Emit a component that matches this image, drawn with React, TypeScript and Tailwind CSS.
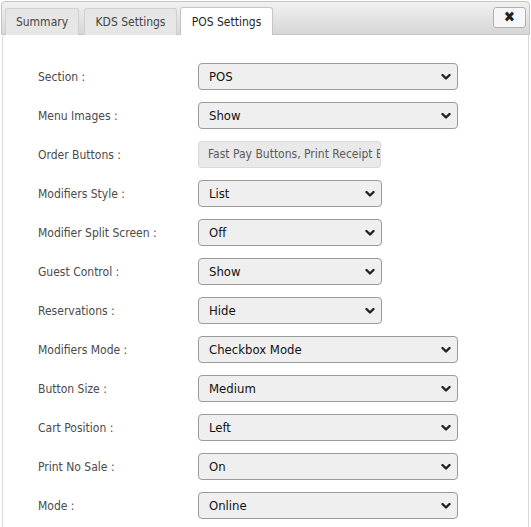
import { useState } from "react"

const font = { fontFamily: '"DejaVu Sans Condensed", "DejaVu Sans", Tahoma, sans-serif' }

type Row = { label: string; value: string; options: string[]; wide: boolean; readOnly?: boolean }

const rows: Row[] = [
  { label: "Section :", value: "POS", options: ["POS", "KDS"], wide: true },
  { label: "Menu Images :", value: "Show", options: ["Show", "Hide"], wide: true },
  { label: "Order Buttons :", value: "Fast Pay Buttons, Print Receipt Button", options: [], wide: false, readOnly: true },
  { label: "Modifiers Style :", value: "List", options: ["List", "Grid"], wide: false },
  { label: "Modifier Split Screen :", value: "Off", options: ["Off", "On"], wide: false },
  { label: "Guest Control :", value: "Show", options: ["Show", "Hide"], wide: false },
  { label: "Reservations :", value: "Hide", options: ["Show", "Hide"], wide: false },
  { label: "Modifiers Mode :", value: "Checkbox Mode", options: ["Checkbox Mode", "Button Mode"], wide: true },
  { label: "Button Size :", value: "Medium", options: ["Small", "Medium", "Large"], wide: true },
  { label: "Cart Position :", value: "Left", options: ["Left", "Right"], wide: true },
  { label: "Print No Sale :", value: "On", options: ["On", "Off"], wide: true },
  { label: "Mode :", value: "Online", options: ["Online", "Offline"], wide: true },
]

const tabs = [
  { name: "Summary", cls: "w-[74px]" },
  { name: "KDS Settings", cls: "ml-[2px] w-[93px]" },
  { name: "POS Settings", cls: "w-[93px]" },
]

function Chevron() {
  return (
    <svg
      className="pointer-events-none absolute right-[7px] top-1/2 -translate-y-1/2"
      width="10"
      height="7"
      viewBox="0 0 10 7"
    >
      <path d="M1.5 1.5 L5 5 L8.5 1.5" fill="none" stroke="#222" strokeWidth="2.4" strokeLinecap="round" strokeLinejoin="round" />
    </svg>
  )
}

function Field({ row }: { row: Row }) {
  const [value, setValue] = useState(row.value)
  if (row.readOnly) {
    return (
      <div className="w-[183px] h-[27px] overflow-hidden whitespace-nowrap rounded-[3px] border border-[#d9d9d9] bg-[#e9e9e9] pl-[9px] text-[12px] leading-[25px] text-[#5a5a5a]">
        {row.value}
      </div>
    )
  }
  return (
    <div className={`relative h-[27px] ${row.wide ? "w-[260px]" : "w-[184px]"}`}>
      <select
        value={value}
        onChange={(e) => setValue(e.target.value)}
        style={font}
        className="h-full w-full appearance-none rounded-[4px] border-[1.5px] border-[#9b9b9b] bg-[#efefef] pl-[10px] text-[13px] font-normal text-[#111] outline-none"
      >
        {row.options.map((o) => (
          <option key={o} value={o}>
            {o}
          </option>
        ))}
      </select>
      <Chevron />
    </div>
  )
}

export default function App() {
  const [tab, setTab] = useState("POS Settings")

  return (
    <div className="w-[531px] h-[527px] overflow-hidden bg-white p-px" style={font}>
      <div className="relative flex h-[34px] items-end gap-[3px] rounded-t-[4px] border border-[#c5c5c5] bg-gradient-to-b from-[#f1f1f1] to-[#d6d6d6] pl-[3px]">
        {tabs.map((t) => (
          <button
            key={t.name}
            onClick={() => setTab(t.name)}
            className={`-mb-px h-[27px] rounded-t-[3px] border border-b-0 text-[12px] ${t.cls} ${
              tab === t.name
                ? "z-10 h-[28px] border-[#c5c5c5] bg-white text-[#1f1f1f]"
                : "border-[#d0d0d0] bg-[#e6e6e6] text-[#454545]"
            }`}
          >
            {t.name}
          </button>
        ))}
        <button className="absolute right-[3px] top-[5px] flex h-[21px] w-[33px] items-center justify-center rounded-[3px] border border-[#b0b0b0] bg-[#f6f6f6] text-[15px] font-bold leading-none text-[#222]">
          ✖
        </button>
      </div>
      <div className="ml-px mr-px h-[600px] rounded-tl-[4px] border border-t-0 border-[#d8d8d8] bg-white pl-[35px] pt-[28px]">
        <div className="flex flex-col gap-[12px]">
          {rows.map((row) => (
            <div key={row.label} className="flex h-[27px] items-center">
              <div className="w-[160px] text-[12px] text-[#4a4a4a]">{row.label}</div>
              <Field row={row} />
            </div>
          ))}
        </div>
      </div>
    </div>
  )
}
